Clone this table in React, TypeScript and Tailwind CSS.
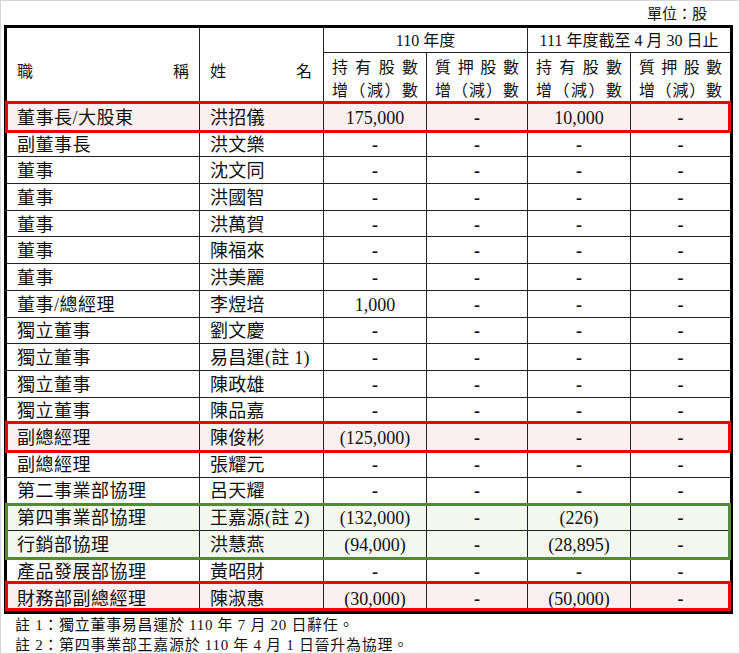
import { FC } from "react";

interface Row {
    title: string;
    name: string;
    held110: string;
    pledged110: string;
    held111: string;
    pledged111: string;
}

const D = "-";

const rows: Row[] = [
    { title: "董事長/大股東", name: "洪招儀", held110: "175,000", pledged110: D, held111: "10,000", pledged111: D },
    { title: "副董事長", name: "洪文樂", held110: D, pledged110: D, held111: D, pledged111: D },
    { title: "董事", name: "沈文同", held110: D, pledged110: D, held111: D, pledged111: D },
    { title: "董事", name: "洪國智", held110: D, pledged110: D, held111: D, pledged111: D },
    { title: "董事", name: "洪萬賀", held110: D, pledged110: D, held111: D, pledged111: D },
    { title: "董事", name: "陳福來", held110: D, pledged110: D, held111: D, pledged111: D },
    { title: "董事", name: "洪美麗", held110: D, pledged110: D, held111: D, pledged111: D },
    { title: "董事/總經理", name: "李煜培", held110: "1,000", pledged110: D, held111: D, pledged111: D },
    { title: "獨立董事", name: "劉文慶", held110: D, pledged110: D, held111: D, pledged111: D },
    { title: "獨立董事", name: "易昌運(註 1)", held110: D, pledged110: D, held111: D, pledged111: D },
    { title: "獨立董事", name: "陳政雄", held110: D, pledged110: D, held111: D, pledged111: D },
    { title: "獨立董事", name: "陳品嘉", held110: D, pledged110: D, held111: D, pledged111: D },
    { title: "副總經理", name: "陳俊彬", held110: "(125,000)", pledged110: D, held111: D, pledged111: D },
    { title: "副總經理", name: "張耀元", held110: D, pledged110: D, held111: D, pledged111: D },
    { title: "第二事業部協理", name: "呂天耀", held110: D, pledged110: D, held111: D, pledged111: D },
    { title: "第四事業部協理", name: "王嘉源(註 2)", held110: "(132,000)", pledged110: D, held111: "(226)", pledged111: D },
    { title: "行銷部協理", name: "洪慧燕", held110: "(94,000)", pledged110: D, held111: "(28,895)", pledged111: D },
    { title: "產品發展部協理", name: "黃昭財", held110: D, pledged110: D, held111: D, pledged111: D },
    { title: "財務部副總經理", name: "陳淑惠", held110: "(30,000)", pledged110: D, held111: "(50,000)", pledged111: D },
];

const NumCell: FC<{ value: string; last?: boolean }> = ({ value, last }) => (
    <div className={last ? "flex items-center justify-center pt-[2px]" : "flex items-center justify-center border-r border-[#222] pt-[2px]"}>
        <span className={value === D ? "font-bold" : ""}>{value}</span>
    </div>
);

const DataRow: FC<{ r: Row; last?: boolean }> = ({ r, last }) => (
    <div
        className={
            last
                ? "grid h-[26.7px] grid-cols-[193px_124px_103px_101px_103px_99px] text-[18px] leading-none"
                : "grid h-[26.7px] grid-cols-[193px_124px_103px_101px_103px_99px] border-b border-[#222] text-[18px] leading-none"
        }
    >
        <div className="flex items-center border-r border-[#222] pl-[10px] pt-[2px] whitespace-nowrap tracking-[0.5px]">{r.title}</div>
        <div className="flex items-center border-r border-[#222] pl-[10px] pt-[2px] whitespace-nowrap tracking-[0.3px]">{r.name}</div>
        <NumCell value={r.held110} />
        <NumCell value={r.pledged110} />
        <NumCell value={r.held111} />
        <NumCell value={r.pledged111} last />
    </div>
);

const Spread: FC<{ chars: string[] }> = ({ chars }) => (
    <div className="flex h-[25px] items-center justify-between">
        {chars.map((c, i) => (
            <span key={i}>{c}</span>
        ))}
    </div>
);

const SubHead: FC<{ first: string[]; last?: boolean }> = ({ first, last }) => (
    <div className={last ? "flex flex-col px-[8px] pt-[3px]" : "flex flex-col border-r border-[#222] px-[8px] pt-[3px]"}>
        <Spread chars={first} />
        <Spread chars={["增", "（", "減", "）", "數"]} />
    </div>
);

export default function App() {
    const held = ["持", "有", "股", "數"];
    const pledged = ["質", "押", "股", "數"];

    return (
        <div className="h-[654px] w-[740px] border border-[#d6d6d6] bg-white font-['Liberation_Serif','Noto_Sans_CJK_TC',serif] text-[#111]">
            <div className="flex h-[24px] items-center justify-end pr-[32px] pt-[2px] text-[15px]">單位：股</div>

            <div className="ml-[3px] w-[729px] border-[3px] border-black">
                {/* header */}
                <div className="grid grid-cols-[193px_124px_103px_101px_103px_99px] grid-rows-[25px_50px] border-b border-[#222] text-[16px] leading-none">
                    <div className="row-span-2 flex items-center justify-between border-r border-[#222] px-[10px] pt-[12px]">
                        <span>職</span>
                        <span>稱</span>
                    </div>
                    <div className="row-span-2 flex items-center justify-between border-r border-[#222] pl-[10px] pr-[11px] pt-[12px]">
                        <span>姓</span>
                        <span>名</span>
                    </div>
                    <div className="col-span-2 flex items-center justify-center border-r border-b border-[#222] pt-[2px]">110 年度</div>
                    <div className="col-span-2 flex items-center justify-center border-b border-[#222] pt-[2px]">111 年度截至 4 月 30 日止</div>
                    <SubHead first={held} />
                    <SubHead first={pledged} />
                    <SubHead first={held} />
                    <SubHead first={pledged} last />
                </div>

                {rows.map((r, i) => {
                    const last = i === rows.length - 1;
                    if (i === 0 || i === 12 || last) {
                        return (
                            <div key={i} className="relative bg-[#fcefef]">
                                <DataRow r={r} last={last} />
                                <div
                                    className={
                                        last
                                            ? "pointer-events-none absolute top-[-3px] bottom-0 left-[-2px] right-[-1px] border-[3px] border-[#f20000]"
                                            : "pointer-events-none absolute top-[-3px] bottom-[-2px] left-[-2px] right-[-1px] border-[3px] border-[#f20000]"
                                    }
                                />
                            </div>
                        );
                    }
                    if (i === 15) {
                        return (
                            <div key={i} className="relative bg-[#f3f7ee]">
                                <DataRow r={r} />
                                <DataRow r={rows[16]} />
                                <div className="pointer-events-none absolute top-[-1px] bottom-[-2px] left-[-2px] right-[-1px] border-[3px] border-[#558a35]" />
                            </div>
                        );
                    }
                    if (i === 16) return null;
                    return <DataRow key={i} r={r} />;
                })}
            </div>

            <div className="pt-[1px] pl-[14px] text-[15px] leading-[20px] tracking-[0.7px]">
                <p>註 1：獨立董事易昌運於 110 年 7 月 20 日辭任。</p>
                <p>註 2：第四事業部王嘉源於 110 年 4 月 1 日晉升為協理。</p>
            </div>
        </div>
    );
}
